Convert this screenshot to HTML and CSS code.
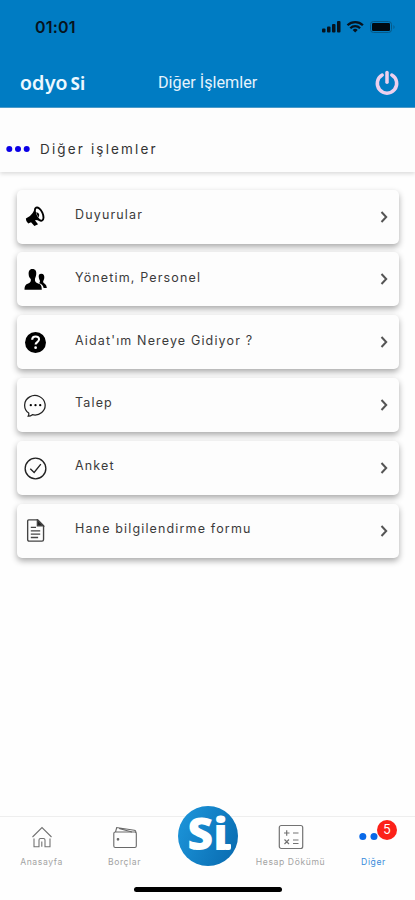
FILE: index.html
```html
<!DOCTYPE html>
<html lang="tr">
<head>
<meta charset="utf-8">
<title>Diğer İşlemler</title>
<link rel="stylesheet" href="styles.css">
</head>
<body>
<div class="app">
  <header class="top">
    <div class="status">
      <span class="clock">01:01</span>
      <svg class="status-icons" width="74" height="14" viewBox="0 0 74 14">
        <g fill="#07131d"><rect x="0" y="8.5" width="3.5" height="4" rx="1"/><rect x="5" y="6.5" width="3.5" height="6" rx="1"/><rect x="10" y="4" width="3.5" height="8.500" rx="1"/><rect x="15" y="1" width="3.500" height="11.500" rx="1"/></g>
        <g fill="none" stroke="#07131d" stroke-width="2.300"><path d="M25.500 5.200a11 11 0 0 1 15.400 0"/><path d="M28.300 8.200a7 7 0 0 1 9.800 0"/></g>
        <path d="M33.200 12.500l-2.500-2.600a3.600 3.600 0 0 1 5 0z" fill="#07131d"/>
        <rect x="48.500" y="1.500" width="21" height="11" rx="3" fill="none" stroke="#075987" stroke-width="1"/>
        <rect x="50" y="3" width="18" height="8" rx="1.200" fill="#000a12"/><path d="M71.500 5a2.500 2.500 0 0 1 0 4z" fill="#075987"/>
      </svg>
    </div>
    <div class="bar">
      <div class="brand"><span class="odyo">odyo</span><span class="si">Si</span></div>
      <h1>Diğer İşlemler</h1>
      <svg class="power" width="26" height="26" viewBox="0 0 26 26" fill="none" stroke="#ecd0ee" stroke-width="3.500" stroke-linecap="round"><path d="M8.200 5a9.700 9.700 0 1 0 9.600 0"/><path d="M13 2.500v9.800"/></svg>
    </div>
  </header>
  <section class="heading">
    <svg width="24" height="8" viewBox="0 0 24 8" fill="#0b00e6"><circle cx="3.300" cy="4" r="3"/><circle cx="12" cy="4" r="3"/><circle cx="20.700" cy="4" r="3"/></svg>
    <h2>Diğer işlemler</h2>
  </section>
  <main class="list">
    <div class="card">
      <svg class="icon" viewBox="0 0 22 22"><g transform="translate(1 1.300) scale(.9) rotate(-25 11 11)"><path d="M1 8.500q5 .3 9-2.300l5-3.600v15.300l-5-3.500H9l1.200 5H5.900l-1.600-5H1q-1.500-3 0-5.900z" fill="#000"/><ellipse cx="15.800" cy="10.200" rx="3.700" ry="7.500" fill="#fdfdfd" stroke="#000" stroke-width="2"/><path d="M13.500 7q4.500 3 0 6.200z" fill="#000"/></g></svg>
      <span class="label">Duyurular</span><svg class="chev" viewBox="0 0 8 12"><path d="M1.500 1l4.700 5-4.700 5"/></svg>
    </div>
    <div class="card">
      <svg class="icon" viewBox="0 0 22 22"><path d="M8 1c3 0 4 2 3.700 5-.2 2-1 3.300-1.200 4.500-.1 2 .2 3 2.500 4 3 1 4 2 4 6.200H.5c0-4.200 1.500-5.200 4-6.200 2-1 2.200-2 2-4C5.500 9.500 4.600 8.500 4.500 6.500 4.200 3.500 5 1 8 1z"/><path d="M16.500 5.500c2.400 0 3.100 1.600 2.900 4-.2 1.700-1.200 2.700-1.100 4 .2 1.500 3.500 2 3.500 5.700h-3c-.4-3-2.300-4-4.600-4.900 2-1 .7-2.800.1-4.600-.7-2.800.1-4.200 2.200-4.200z"/></svg>
      <span class="label">Yönetim, Personel</span><svg class="chev" viewBox="0 0 8 12"><path d="M1.500 1l4.700 5-4.700 5"/></svg>
    </div>
    <div class="card">
      <svg class="icon" viewBox="0 0 22 22"><circle cx="11" cy="11" r="10"/><path d="M7.800 8.300c.1-4.100 6.600-4.100 6.600-.3 0 2.600-3.300 2.600-3.300 5" fill="none" stroke="#fff" stroke-width="2"/><circle cx="11.100" cy="16" r="1.300" fill="#fff"/></svg>
      <span class="label">Aidat'ım Nereye Gidiyor ?</span><svg class="chev" viewBox="0 0 8 12"><path d="M1.500 1l4.700 5-4.700 5"/></svg>
    </div>
    <div class="card">
      <svg class="icon" viewBox="0 0 22 22"><path d="M4.500 18.200A9.800 9.300 0 1 1 8 19.800q-2 1.500-4 1.300.9-1.200.5-2.900z" fill="none" stroke="#222" stroke-width="1.200"/><circle cx="6.500" cy="10.700" r="1.100"/><circle cx="11" cy="10.700" r="1.100"/><circle cx="15.500" cy="10.700" r="1.100"/></svg>
      <span class="label">Talep</span><svg class="chev" viewBox="0 0 8 12"><path d="M1.500 1l4.700 5-4.700 5"/></svg>
    </div>
    <div class="card">
      <svg class="icon" viewBox="0 0 22 22" fill="none" stroke="#222" stroke-width="1.300"><circle cx="11" cy="11" r="9.900"/><path d="M6 11.300l3.700 3.500 6.400-8"/></svg>
      <span class="label">Anket</span><svg class="chev" viewBox="0 0 8 12"><path d="M1.500 1l4.700 5-4.700 5"/></svg>
    </div>
    <div class="card">
      <svg class="icon" viewBox="0 0 22 22" fill="none" stroke="#444" stroke-width="1.300"><path d="M4.500.8h8.700l5.500 5.700v13.200q0 1.500-1.500 1.500H5q-1.500 0-1.500-1.500V1.800q0-1 1-1z"/><path d="M12.800 1v5.500h5.700z" fill="#222"/><path d="M6.500 8h5M6.500 11.300h9M6.500 14.500h9M6.500 17.700h7"/></svg>
      <span class="label">Hane bilgilendirme formu</span><svg class="chev" viewBox="0 0 8 12"><path d="M1.500 1l4.700 5-4.700 5"/></svg>
    </div>
  </main>
  <nav class="tabs">
    <div class="tab"><svg width="26" height="26" viewBox="0 0 26 26" fill="none" stroke="#737373" stroke-width="1.100"><path d="M3.500 13L13 3.500l9.500 9.500M5 14.500v8.200h5V16q0-1.500 1.500-1.500h3Q16 14.500 16 16v6.700h5v-8.200M12.800 17.500v5.200"/></svg><span>Anasayfa</span></div>
    <div class="tab"><svg width="26" height="26" viewBox="0 0 26 26" fill="none" stroke="#686868" stroke-width="1.100"><rect x="1.800" y="8" width="22.500" height="15.500" rx="1.500"/><path d="M3.500 8l1.200-4.500 17.600 2.700q1.800.3 1.500 2.500M7 4.500l13 3.500"/><circle cx="6" cy="15.300" r=".8" fill="#444"/></svg><span>Borçlar</span></div>
    <div class="center"><div class="logo">Si</div></div>
    <div class="tab"><svg width="26" height="26" viewBox="0 0 26 26" fill="none" stroke="#737373" stroke-width="1.200"><rect x="1.300" y="1.500" width="23.400" height="23" rx="2"/><path d="M6 9h5.500M8.700 6.200v5.600M15 9h5.500M6.500 15.500l4.500 4.500M11 15.500L6.500 20M15 16h5.500M15 19.500h5.500"/></svg><span>Hesap Dökümü</span></div>
    <div class="tab active"><svg width="30" height="26" viewBox="0 0 30 26" fill="#0969e8"><circle cx="3.800" cy="12.500" r="3.500"/><circle cx="15" cy="12.500" r="3.500"/></svg><span>Diğer</span><b class="badge">5</b></div>
  </nav>
  <div class="home"></div>
</div>
</body>
</html>
```

FILE: styles.css
```css
* { box-sizing: border-box; }
body { margin: 0; background: #fff; font-family: Inter, sans-serif; }
.app { width: 415px; height: 900px; display: flex; flex-direction: column; overflow: hidden; background: #fefefe; }
.top { height: 108px; background: #007cc3; border-bottom: 1px solid #4d9dcc; flex: none; }
.status { height: 54px; display: flex; justify-content: space-between; align-items: center; padding: 0 19px 0 35px; }
.clock { font-size: 16px; font-weight: 600; color: #07131d; letter-spacing: .2px; }
.bar { height: 55px; display: grid; grid-template-columns: 138px 1fr 138px; align-items: center; padding: 2px 15px 0 20px; }
.brand { display: flex; align-items: baseline; color: #edf8ff; height: 24px; line-height: 24px; gap: 3px; }
.odyo { font-size: 19.5px; font-weight: 600; letter-spacing: .1px; }
.si { font: 700 17px/24px "Open Sans", sans-serif; }
h1 { font: 400 16.2px/22px Roboto, sans-serif; margin: 0; color: #e5f3fc; white-space: nowrap; }
.power { justify-self: end; }
.heading { height: 64px; flex: none; padding: 18px 0 0 6px; display: flex; align-items: center; gap: 10px; background: #fdfdfd; box-shadow: 0 2px 4px #0002; }
h2 { font-size: 13.5px; font-weight: 400; letter-spacing: 2.150px; margin: 0; color: #333; }
.list { margin: 17.500px 16px 0 17px; display: flex; flex-direction: column; gap: 8.900px; }
.card { height: 54px; border-radius: 5px; background: #fdfdfd; box-shadow: 0 3px 6px #0005; display: flex; align-items: center; padding: 0 11px 0 7px; }
.icon { width: 23px; height: 23px; flex: none; }
.label { margin-left: 28px; flex: 1; font-size: 12.5px; line-height: 18px; color: #3b3b3b; letter-spacing: 1.15px; padding-bottom: 3.500px; white-space: nowrap; }
.chev { width: 8px; height: 12px; flex: none; fill: none; stroke: #555; stroke-width: 2; }
.tabs { margin-top: auto; height: 65px; flex: none; display: grid; grid-template-columns: repeat(5, 83px); border-top: 1px solid #eee; }
.tab { display: flex; flex-direction: column; align-items: center; padding-top: 7px; position: relative; font-size: 8.600px; color: #a3a3a3; }
.tab svg { flex: none; }
.tab span { line-height: 12px; margin-top: 6px; white-space: nowrap; letter-spacing: .6px; }
.tab.active { color: #3a8bdb; }
.center { display: flex; justify-content: center; }
.logo { position: relative; width: 60px; height: 60px; margin-top: -11px; border-radius: 50%; background: linear-gradient(115deg, #1d97dc, #0869ae); color: #fff; font: 800 45px/54px "Open Sans", sans-serif; text-align: center; }
.logo::after { content: ""; position: absolute; left: 43px; top: 38px; width: 10px; height: 6px; background: #fff; border-radius: 0 1px 2px 5px; }
.badge { position: absolute; left: 45px; top: 3px; width: 20px; height: 20px; border-radius: 50%; background: #fc2119; color: #fff; font-size: 12.500px; font-weight: 400; line-height: 20px; text-align: center; }
.home { height: 5px; width: 148px; border-radius: 3px; background: #000; margin: 6px auto 8px; flex: none; }
```
